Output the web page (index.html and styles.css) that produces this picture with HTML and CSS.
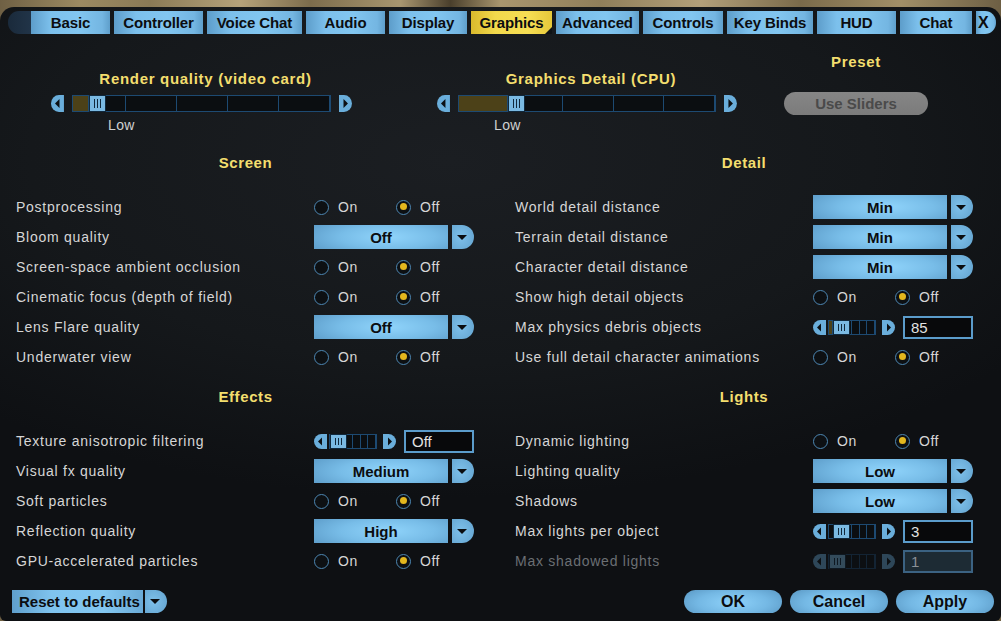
FILE: index.html
```html
<!DOCTYPE html>
<html lang="en">
<head>
<meta charset="utf-8">
<title>Options - Graphics</title>
<link rel="stylesheet" href="styles.css">
</head>
<body>
<div class="window">
  <nav class="tabs">
    <span class="tab-cap"></span>
    <span class="tab t-basic">Basic</span>
    <span class="tab t-controller">Controller</span>
    <span class="tab t-voice">Voice Chat</span>
    <span class="tab t-audio">Audio</span>
    <span class="tab t-display">Display</span>
    <span class="tab t-graphics active">Graphics</span>
    <span class="tab t-advanced">Advanced</span>
    <span class="tab t-controls">Controls</span>
    <span class="tab t-keybinds">Key Binds</span>
    <span class="tab t-hud">HUD</span>
    <span class="tab t-chat">Chat</span>
    <span class="tab t-close">X</span>
  </nav>

  <section class="presets">
    <div class="preset-block render">
      <h2 class="title">Render quality (video card)</h2>
      <div class="big-slider">
        <svg class="arrow" width="13" height="17" viewBox="0 0 13 17"><path d="M13 0H8A8 8.5 0 0 0 8 17H13Z" fill="#6aaedb"/><path d="M4 8.5L8.5 4V13Z" fill="#0c1014"/></svg>
        <div class="track big">
          <span class="seg"></span><span class="seg"></span><span class="seg"></span><span class="seg"></span><span class="seg"></span>
          <span class="fill" style="width:16px"></span>
          <span class="thumb" style="left:16px"></span>
        </div>
        <svg class="arrow" width="13" height="17" viewBox="0 0 13 17"><path d="M0 0H5A8 8.5 0 0 1 5 17H0Z" fill="#6aaedb"/><path d="M9 8.5L4.5 4V13Z" fill="#0c1014"/></svg>
      </div>
      <div class="level">Low</div>
    </div>
    <div class="preset-block detail">
      <h2 class="title">Graphics Detail (CPU)</h2>
      <div class="big-slider">
        <svg class="arrow" width="13" height="17" viewBox="0 0 13 17"><path d="M13 0H8A8 8.5 0 0 0 8 17H13Z" fill="#6aaedb"/><path d="M4 8.5L8.5 4V13Z" fill="#0c1014"/></svg>
        <div class="track big">
          <span class="seg"></span><span class="seg"></span><span class="seg"></span><span class="seg"></span><span class="seg"></span>
          <span class="fill" style="width:49px"></span>
          <span class="thumb" style="left:49px"></span>
        </div>
        <svg class="arrow" width="13" height="17" viewBox="0 0 13 17"><path d="M0 0H5A8 8.5 0 0 1 5 17H0Z" fill="#6aaedb"/><path d="M9 8.5L4.5 4V13Z" fill="#0c1014"/></svg>
      </div>
      <div class="level">Low</div>
    </div>
    <div class="preset-block preset">
      <h2 class="title">Preset</h2>
      <button class="pill gray">Use Sliders</button>
    </div>
  </section>

  <main class="settings">
    <div class="col">
      <h3 class="heading">Screen</h3>
      <div class="row"><span class="label">Postprocessing</span>
        <div class="radios"><span class="opt"><i class="radio"></i>On</span><span class="opt"><i class="radio on"></i>Off</span></div></div>
      <div class="row"><span class="label">Bloom quality</span>
        <div class="dropdown"><span class="dd-main">Off</span><span class="dd-btn"></span></div></div>
      <div class="row"><span class="label">Screen-space ambient occlusion</span>
        <div class="radios"><span class="opt"><i class="radio"></i>On</span><span class="opt"><i class="radio on"></i>Off</span></div></div>
      <div class="row"><span class="label">Cinematic focus (depth of field)</span>
        <div class="radios"><span class="opt"><i class="radio"></i>On</span><span class="opt"><i class="radio on"></i>Off</span></div></div>
      <div class="row"><span class="label">Lens Flare quality</span>
        <div class="dropdown"><span class="dd-main">Off</span><span class="dd-btn"></span></div></div>
      <div class="row"><span class="label">Underwater view</span>
        <div class="radios"><span class="opt"><i class="radio"></i>On</span><span class="opt"><i class="radio on"></i>Off</span></div></div>

      <h3 class="heading second">Effects</h3>
      <div class="row"><span class="label">Texture anisotropic filtering</span>
        <div class="numeric">
          <svg class="arrow" width="13" height="15" viewBox="0 0 13 15"><path d="M13 0H7.5A7.5 7.5 0 0 0 7.5 15H13Z" fill="#6aaedb"/><path d="M4 7.5L8 3.5V11.5Z" fill="#0c1014"/></svg>
          <div class="track small">
            <span class="seg"></span><span class="seg"></span><span class="seg"></span><span class="seg"></span><span class="seg"></span><span class="seg"></span>
            <span class="thumb" style="left:0"></span>
          </div>
          <svg class="arrow" width="13" height="15" viewBox="0 0 13 15"><path d="M0 0H5.5A7.5 7.5 0 0 1 5.5 15H0Z" fill="#6aaedb"/><path d="M9 7.5L5 3.5V11.5Z" fill="#0c1014"/></svg>
          <span class="numbox">Off</span>
        </div></div>
      <div class="row"><span class="label">Visual fx quality</span>
        <div class="dropdown"><span class="dd-main">Medium</span><span class="dd-btn"></span></div></div>
      <div class="row"><span class="label">Soft particles</span>
        <div class="radios"><span class="opt"><i class="radio"></i>On</span><span class="opt"><i class="radio on"></i>Off</span></div></div>
      <div class="row"><span class="label">Reflection quality</span>
        <div class="dropdown"><span class="dd-main">High</span><span class="dd-btn"></span></div></div>
      <div class="row"><span class="label">GPU-accelerated particles</span>
        <div class="radios"><span class="opt"><i class="radio"></i>On</span><span class="opt"><i class="radio on"></i>Off</span></div></div>
    </div>

    <div class="col">
      <h3 class="heading">Detail</h3>
      <div class="row"><span class="label">World detail distance</span>
        <div class="dropdown"><span class="dd-main">Min</span><span class="dd-btn"></span></div></div>
      <div class="row"><span class="label">Terrain detail distance</span>
        <div class="dropdown"><span class="dd-main">Min</span><span class="dd-btn"></span></div></div>
      <div class="row"><span class="label">Character detail distance</span>
        <div class="dropdown"><span class="dd-main">Min</span><span class="dd-btn"></span></div></div>
      <div class="row"><span class="label">Show high detail objects</span>
        <div class="radios"><span class="opt"><i class="radio"></i>On</span><span class="opt"><i class="radio on"></i>Off</span></div></div>
      <div class="row"><span class="label">Max physics debris objects</span>
        <div class="numeric">
          <svg class="arrow" width="13" height="15" viewBox="0 0 13 15"><path d="M13 0H7.5A7.5 7.5 0 0 0 7.5 15H13Z" fill="#6aaedb"/><path d="M4 7.5L8 3.5V11.5Z" fill="#0c1014"/></svg>
          <div class="track small">
            <span class="seg"></span><span class="seg"></span><span class="seg"></span><span class="seg"></span><span class="seg"></span><span class="seg"></span>
            <span class="fill" style="width:4px"></span>
            <span class="thumb" style="left:4px"></span>
          </div>
          <svg class="arrow" width="13" height="15" viewBox="0 0 13 15"><path d="M0 0H5.5A7.5 7.5 0 0 1 5.5 15H0Z" fill="#6aaedb"/><path d="M9 7.5L5 3.5V11.5Z" fill="#0c1014"/></svg>
          <span class="numbox">85</span>
        </div></div>
      <div class="row"><span class="label">Use full detail character animations</span>
        <div class="radios"><span class="opt"><i class="radio"></i>On</span><span class="opt"><i class="radio on"></i>Off</span></div></div>

      <h3 class="heading second">Lights</h3>
      <div class="row"><span class="label">Dynamic lighting</span>
        <div class="radios"><span class="opt"><i class="radio"></i>On</span><span class="opt"><i class="radio on"></i>Off</span></div></div>
      <div class="row"><span class="label">Lighting quality</span>
        <div class="dropdown"><span class="dd-main">Low</span><span class="dd-btn"></span></div></div>
      <div class="row"><span class="label">Shadows</span>
        <div class="dropdown"><span class="dd-main">Low</span><span class="dd-btn"></span></div></div>
      <div class="row"><span class="label">Max lights per object</span>
        <div class="numeric">
          <svg class="arrow" width="13" height="15" viewBox="0 0 13 15"><path d="M13 0H7.5A7.5 7.5 0 0 0 7.5 15H13Z" fill="#6aaedb"/><path d="M4 7.5L8 3.5V11.5Z" fill="#0c1014"/></svg>
          <div class="track small">
            <span class="seg"></span><span class="seg"></span><span class="seg"></span><span class="seg"></span><span class="seg"></span><span class="seg"></span>
            <span class="thumb" style="left:4px"></span>
          </div>
          <svg class="arrow" width="13" height="15" viewBox="0 0 13 15"><path d="M0 0H5.5A7.5 7.5 0 0 1 5.5 15H0Z" fill="#6aaedb"/><path d="M9 7.5L5 3.5V11.5Z" fill="#0c1014"/></svg>
          <span class="numbox">3</span>
        </div></div>
      <div class="row disabled"><span class="label">Max shadowed lights</span>
        <div class="numeric">
          <svg class="arrow" width="13" height="15" viewBox="0 0 13 15"><path d="M13 0H7.5A7.5 7.5 0 0 0 7.5 15H13Z" fill="#6aaedb"/><path d="M4 7.5L8 3.5V11.5Z" fill="#0c1014"/></svg>
          <div class="track small">
            <span class="seg"></span><span class="seg"></span><span class="seg"></span><span class="seg"></span><span class="seg"></span><span class="seg"></span>
            <span class="thumb" style="left:0"></span>
          </div>
          <svg class="arrow" width="13" height="15" viewBox="0 0 13 15"><path d="M0 0H5.5A7.5 7.5 0 0 1 5.5 15H0Z" fill="#6aaedb"/><path d="M9 7.5L5 3.5V11.5Z" fill="#0c1014"/></svg>
          <span class="numbox">1</span>
        </div></div>
    </div>
  </main>

  <footer class="footer">
    <div class="dropdown reset"><span class="dd-main">Reset to defaults</span><span class="dd-btn"></span></div>
    <div class="actions">
      <button class="pill">OK</button>
      <button class="pill">Cancel</button>
      <button class="pill">Apply</button>
    </div>
  </footer>
</div>
</body>
</html>
```

FILE: styles.css
```css
* { box-sizing: border-box; }

html, body {
  margin: 0;
  padding: 0;
  width: 1001px;
  height: 621px;
  overflow: hidden;
}

body {
  background:
    linear-gradient(90deg, #6f6044 0%, #9c8a62 8%, #8a7a56 15%, #b5a27a 24%, #7c6c4c 31%, #a89670 40%, #4a3f2c 45%, #a9966e 50%, #8f7e5a 60%, #b3a07a 70%, #7a6a4a 80%, #a18f68 90%, #6d5f44 100%);
  font-family: "Liberation Sans", Arial, sans-serif;
  color: #d6d6d6;
}

.window {
  margin-top: 7px;
  height: 614px;
  border-radius: 14px 14px 6px 6px;
  background:
    radial-gradient(ellipse 70% 55% at 45% 25%, #1b1e22 0%, #15181b 60%, #0e1013 100%);
  overflow: hidden;
}

/* ---------- Tabs ---------- */
.tabs {
  display: flex;
  gap: 4px;
  padding: 4px 0 0 8px;
  height: 27px;
}

.tab-cap {
  width: 23px;
  height: 23px;
  margin-right: -4px;
  border-radius: 11px 0 0 11px;
  background: linear-gradient(90deg, #1a2a3b, #213448);
}

.tab {
  height: 23px;
  display: flex;
  align-items: center;
  justify-content: center;
  font-weight: bold;
  font-size: 15px;
  letter-spacing: -0.1px;
  color: #0b0d10;
  background: linear-gradient(90deg, #5d9dca 0%, #7cc0ec 25%, #82c6f0 60%, #74b6e2 90%, #5f9fcb 100%);
  position: relative;
}

.t-basic { width: 79px; }
.t-controller { width: 89px; }
.t-voice { width: 95px; }
.t-audio { width: 79px; }
.t-display { width: 78px; }
.t-graphics { width: 81px; }
.t-advanced { width: 83px; }
.t-controls { width: 80px; }
.t-keybinds { width: 86px; }
.t-hud { width: 79px; }
.t-chat { width: 72px; }
.t-close {
  width: 20px;
  border-radius: 0 11px 11px 0;
  font-size: 16px;
  justify-content: flex-start;
  padding-left: 2px;
}

.tab.active {
  background: linear-gradient(90deg, #d9b92c 0%, #f2d94c 30%, #f6de54 70%, #e6c83a 100%);
}
.tab.active::after {
  content: "";
  position: absolute;
  right: 0;
  bottom: 0;
  border-style: solid;
  border-width: 0 0 7px 7px;
  border-color: transparent transparent #0f1215 transparent;
}

/* ---------- Presets ---------- */
.presets {
  display: flex;
  align-items: flex-start;
  height: 111px;
  padding-left: 51px;
}

.preset-block { display: flex; flex-direction: column; }
.render { width: 301px; padding-top: 36px; }
.detail { width: 300px; padding-top: 36px; margin-left: 85px; }
.preset { width: 144px; padding-top: 19px; margin-left: 47px; align-items: center; }

.title {
  margin: 0;
  font-size: 15px;
  line-height: 18px;
  font-weight: bold;
  letter-spacing: 0.7px;
  color: #f3de6e;
  text-align: center;
  padding-left: 8px;
}
.preset .title { padding-left: 0; }

.big-slider {
  display: flex;
  align-items: center;
  gap: 8px;
  margin-top: 7px;
  height: 17px;
}

.track {
  position: relative;
  display: flex;
  border: 1px solid #1d4a72;
  background: #0b0e11;
}
.track .seg {
  flex: 1;
  border-right: 1px solid #1d4a72;
}
.track .seg:last-of-type { border-right: 0; }

.track.big { width: 260px; height: 17px; }
.track.big .seg:first-child { flex: 1.05; }

.fill {
  position: absolute;
  left: 0;
  top: 0;
  bottom: 0;
  background: #4c4118;
  border-right: 1px solid #1d4a72;
}

.thumb {
  position: absolute;
  top: -1px;
  bottom: -1px;
  width: 17px;
  border: 1px solid #10283c;
  background-color: #7ab9e2;
  background-image: linear-gradient(90deg,
    transparent 0 4px, #10283c 4px 5px,
    transparent 5px 7px, #10283c 7px 8px,
    transparent 8px 10px, #10283c 10px 11px,
    transparent 11px);
  background-size: 100% calc(100% - 6px);
  background-position: 0 3px;
  background-repeat: no-repeat;
}

.level {
  margin-top: 5px;
  margin-left: 57px;
  font-size: 14px;
  line-height: 16px;
  letter-spacing: 0.4px;
  color: #d0d0d0;
}

.pill {
  border: 0;
  font-family: inherit;
  font-weight: bold;
  font-size: 16px;
  color: #0b0d10;
  height: 23px;
  border-radius: 12px;
  background: radial-gradient(ellipse 65% 90% at 50% 55%, #8ed2fa 0%, #74b8e4 55%, #5896c2 100%);
  padding: 0;
}
.pill.gray {
  margin-top: 21px;
  width: 144px;
  background: linear-gradient(180deg, #868686, #7b7b7b);
  color: #4a4a4a;
  font-size: 15px;
}

/* ---------- Settings ---------- */
.settings {
  display: grid;
  grid-template-columns: 459px 458px;
  column-gap: 40px;
  padding-left: 16px;
}

.heading {
  margin: 9px 0 20px;
  font-size: 15px;
  line-height: 18px;
  font-weight: bold;
  letter-spacing: 0.6px;
  color: #f3de6e;
  text-align: center;
}
.heading.second { margin-top: 16px; }

.row {
  display: flex;
  align-items: center;
  height: 30px;
}

.label {
  flex: none;
  width: 298px;
  font-size: 14px;
  letter-spacing: 0.75px;
  color: #d6d6d6;
  white-space: nowrap;
}

.row.disabled .label { color: #6b6f73; }
.row.disabled .numeric .arrow,
.row.disabled .numeric .track { opacity: 0.35; }
.row.disabled .numbox {
  background: #1d2b34;
  border-color: #3b6282;
  color: #8a9096;
}

.radios { display: flex; flex: none; }
.opt {
  display: flex;
  align-items: center;
  font-size: 14px;
  letter-spacing: 0.5px;
  color: #d6d6d6;
}
.opt:first-child { width: 82px; }
.radio {
  flex: none;
  width: 15px;
  height: 15px;
  border-radius: 50%;
  border: 1.5px solid #4d87b3;
  background: #0d1013;
  margin-right: 9px;
  position: relative;
}
.radio.on::after {
  content: "";
  position: absolute;
  left: 2.5px;
  top: 2.5px;
  width: 7px;
  height: 7px;
  border-radius: 50%;
  background: #e2b71e;
}

.dropdown {
  display: flex;
  flex: none;
  gap: 4px;
  height: 24px;
  width: 160px;
}
.dd-main {
  width: 134px;
  display: flex;
  align-items: center;
  justify-content: center;
  font-weight: bold;
  font-size: 15px;
  color: #0b0d10;
  background: radial-gradient(ellipse 70% 100% at 55% 50%, #90d4fb 0%, #78bde8 50%, #5a99c6 100%);
}
.dd-btn {
  width: 22px;
  border-radius: 0 12px 12px 0;
  background: radial-gradient(ellipse 90% 100% at 40% 50%, #7ec0ea 0%, #5d9dc9 100%);
  position: relative;
}
.dd-btn::after {
  content: "";
  position: absolute;
  left: 5px;
  top: 10px;
  border-style: solid;
  border-width: 5px 5px 0 5px;
  border-color: #0b0d10 transparent transparent transparent;
}

.numeric {
  display: flex;
  flex: none;
  align-items: center;
  width: 161px;
}
.numeric .arrow { flex: none; }
.track.small {
  flex: none;
  width: 48px;
  height: 15px;
  margin: 0 6px 0 2px;
}
.track.small .thumb { width: 17px; }
.numbox {
  flex: none;
  margin-left: 8px;
  width: 70px;
  height: 23px;
  border: 2px solid #5b9ccb;
  background: #08090b;
  color: #e2e2e2;
  font-size: 15px;
  line-height: 19px;
  padding-left: 6px;
}

/* ---------- Footer ---------- */
.footer {
  display: flex;
  justify-content: space-between;
  align-items: center;
  margin-top: 14px;
  padding: 0 7px 0 12px;
}
.dropdown.reset { width: 156px; gap: 2px; height: 23px; }
.reset .dd-main {
  width: 131px;
  justify-content: flex-start;
  padding-left: 7px;
  font-size: 15px;
  background: linear-gradient(90deg, #5f9fcc 0%, #7fc3ee 30%, #83c7f1 70%, #6aaad6 100%);
}
.reset .dd-btn::after { top: 9px; }

.actions { display: flex; gap: 8px; }
.actions .pill { width: 98px; }
```
